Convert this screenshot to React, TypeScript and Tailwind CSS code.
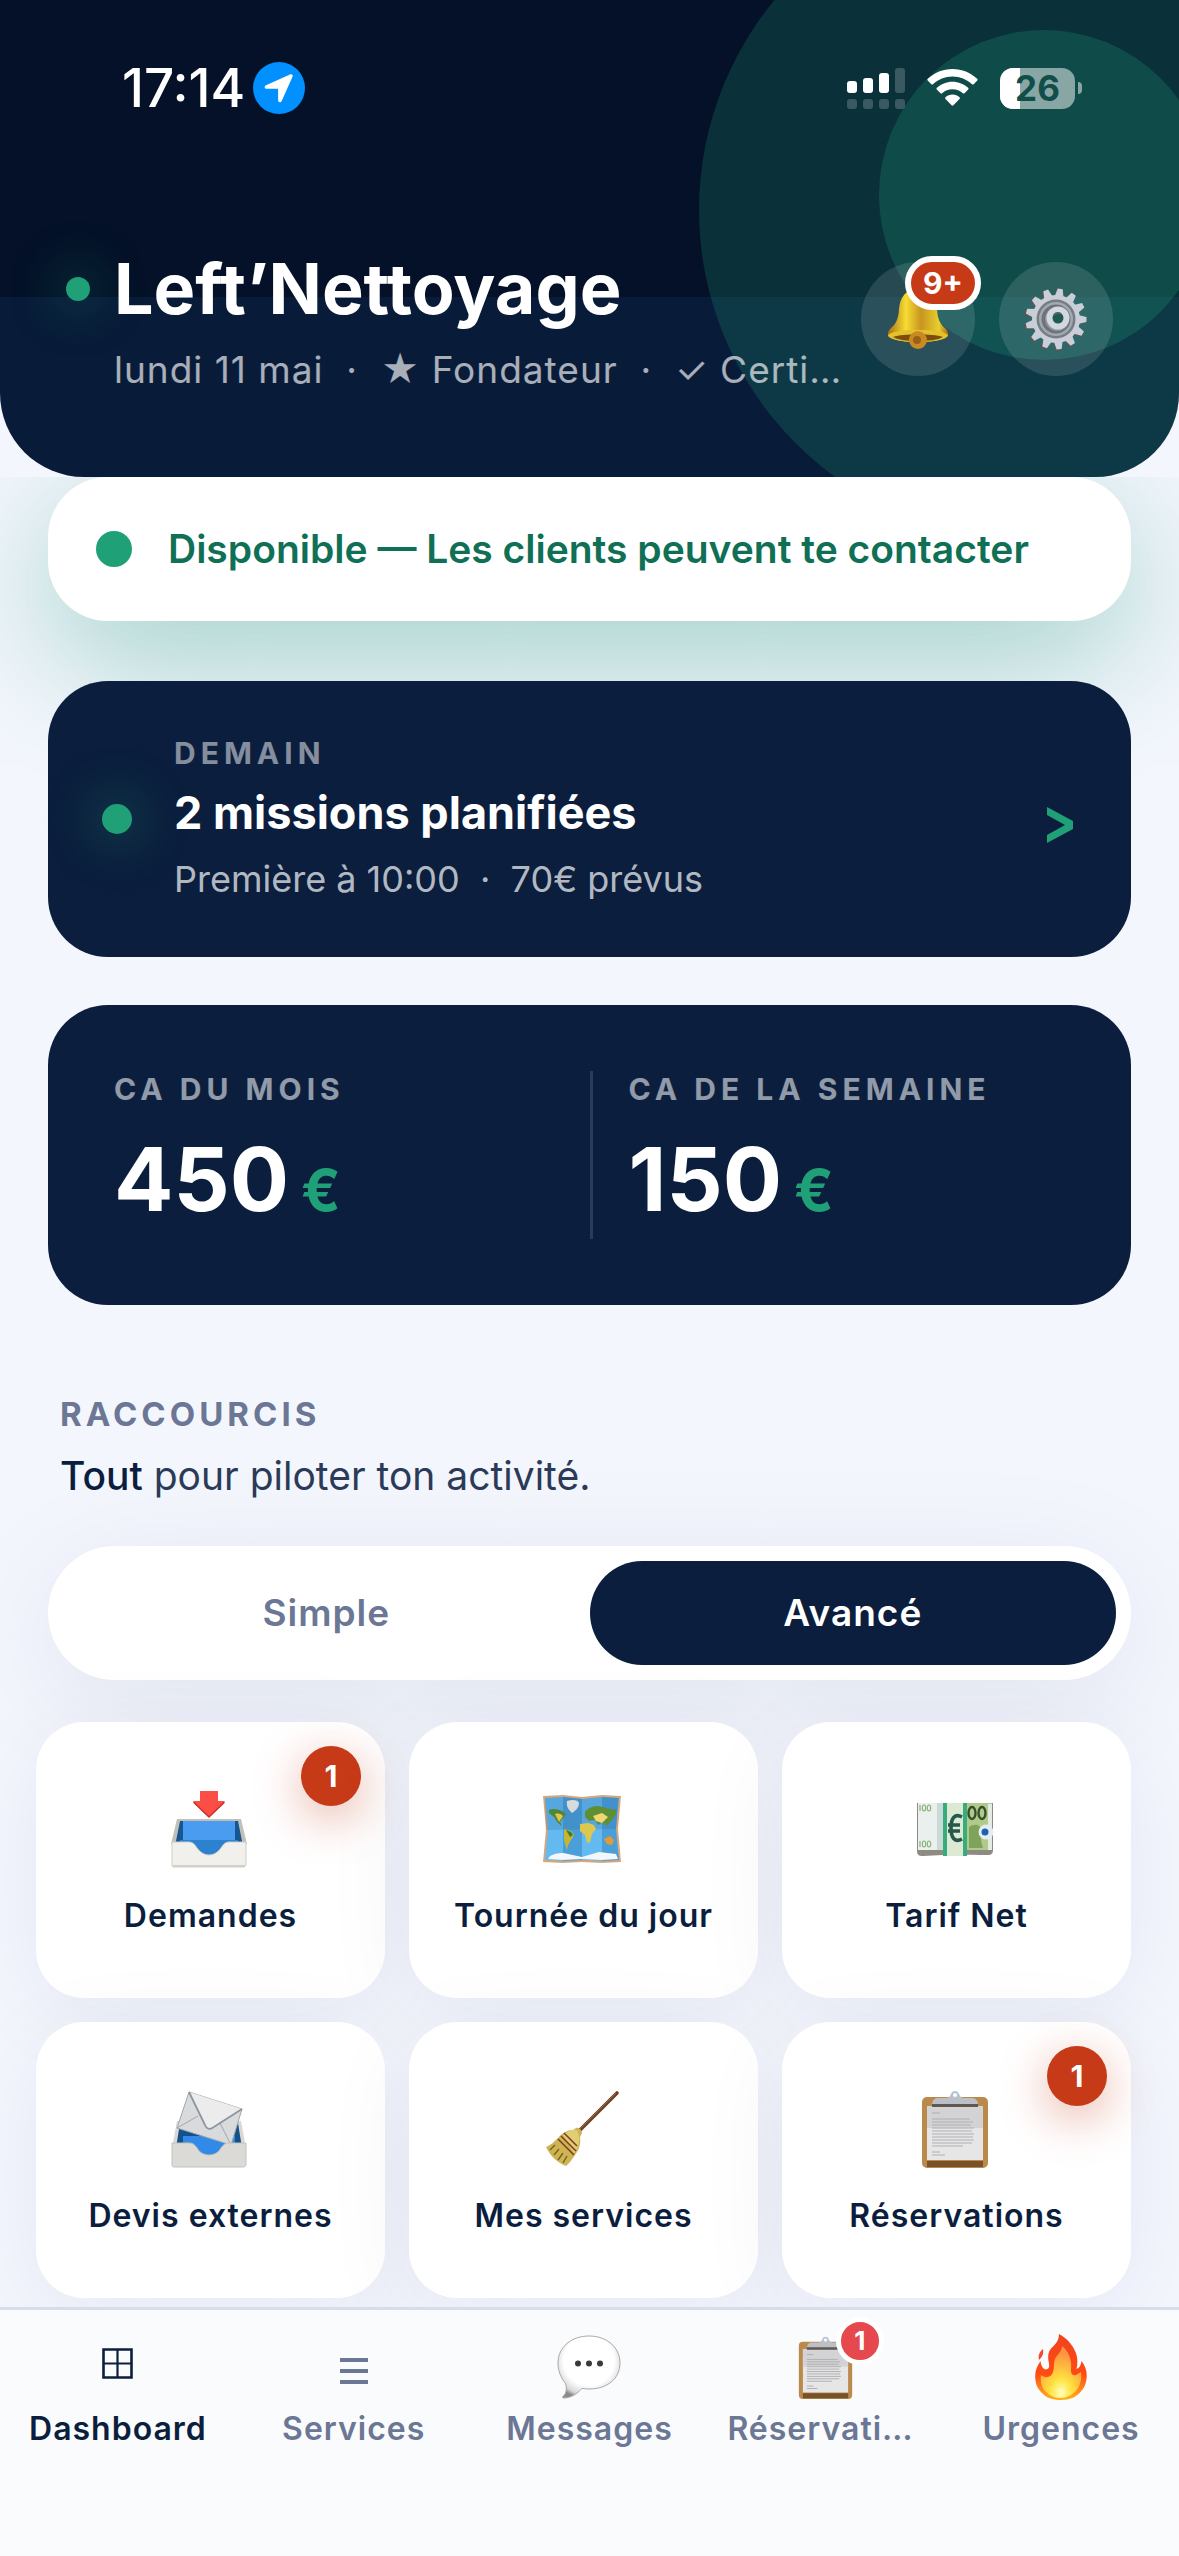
import type { ReactNode } from "react";

/* ---------- Status bar ---------- */

function SignalIcon() {
  const bars = [
    { x: 0, y: 13, h: 12, o: 1 },
    { x: 16, y: 10, h: 15, o: 1 },
    { x: 32, y: 5, h: 20, o: 1 },
    { x: 48, y: 0, h: 25, o: 0.2 },
  ];
  return (
    <svg width="58" height="41" viewBox="0 0 58 41" fill="#fff" aria-hidden="true">
      {bars.map((b) => (
        <g key={b.x}>
          <rect x={b.x} y={b.y} width="10" height={b.h} rx="3" opacity={b.o} />
          <rect x={b.x} y="31" width="10" height="10" rx="3" opacity="0.2" />
        </g>
      ))}
    </svg>
  );
}

function WifiIcon() {
  return (
    <svg width="51" height="38" viewBox="0 0 51 38" fill="#fff" aria-hidden="true">
      <path d="M25.500 0C35 0 43.700 3.700 50.200 9.800c.6.6.6 1.200.1 1.800l-3.600 3.600c-.5.5-1.200.5-1.700 0C39.800 10.400 33 7.500 25.500 7.500S11.200 10.400 6 15.200c-.5.5-1.200.5-1.700 0L.7 11.600c-.5-.6-.5-1.200.1-1.800C7.300 3.700 16 0 25.500 0z" />
      <path d="M25.500 12.700c6 0 11.500 2.300 15.600 6.100.6.6.6 1.200.1 1.800l-3.700 3.600c-.5.5-1.100.5-1.700.1-2.700-2.500-6.300-4-10.300-4s-7.600 1.500-10.300 4c-.6.4-1.200.4-1.700-.1l-3.700-3.600c-.5-.6-.5-1.200.1-1.800 4.100-3.800 9.600-6.100 15.600-6.100z" />
      <path d="M25.500 25.500c2.700 0 5.100 1 7 2.700.6.5.6 1.200 0 1.700l-6.100 6.400c-.5.6-1.300.6-1.800 0l-6.100-6.400c-.6-.5-.6-1.200 0-1.700 1.900-1.700 4.300-2.700 7-2.700z" />
    </svg>
  );
}

function StatusBar() {
  return (
    <div className="flex items-center justify-between pr-[97px] pl-[122px] text-white">
      <div className="flex items-center gap-2">
        <span className="text-[53px] leading-[52px] font-medium">17:14</span>
        <span className="flex size-[52px] items-center justify-center rounded-full bg-[#0090ff]">
          <svg width="30" height="30" viewBox="0 0 30 30" fill="#fff" aria-hidden="true">
            <path d="M26.500 1.300 2 12.200c-2 .9-1.500 3.600.7 3.600h10.800c.3 0 .6.300.6.600v10.800c0 2.200 2.700 2.700 3.600.7L28.600 3.400c.6-1.400-.7-2.700-2.100-2.100z" />
          </svg>
        </span>
      </div>
      <div className="flex items-center gap-[22px]">
        <SignalIcon />
        <WifiIcon />
        <span className="flex items-center gap-[3px]">
          <span className="relative flex h-[41px] w-[75px] items-center justify-center overflow-hidden rounded-[13px] bg-white/50">
            <span className="absolute inset-y-0 left-0 w-5 bg-white" />
            <span className="relative text-[35px] leading-none font-bold text-[#0f4e49]">26</span>
          </span>
          <span className="h-3 w-1 rounded-r-full bg-white/50" />
        </span>
      </div>
    </div>
  );
}

/* ---------- Pictograms ---------- */

function BellIcon() {
  return (
    <svg width="62" height="64" viewBox="0 0 62 64" aria-hidden="true">
      <defs>
        <linearGradient id="bell" x1="0" x2="1">
          <stop offset="0" stopColor="#a8700f" />
          <stop offset=".3" stopColor="#f7dc35" />
          <stop offset=".55" stopColor="#c89420" />
          <stop offset=".85" stopColor="#e9cf2e" />
          <stop offset="1" stopColor="#a66c10" />
        </linearGradient>
      </defs>
      <path d="M31 2c12 0 18 8 19 20 .6 10 3 15 8 19 2 2 3.500 4 3 7-.3 4-13 7-30 7S1.300 52 1 48c-.5-3 1-5 3-7 5-4 7.400-9 8-19C13 10 19 2 31 2z" fill="url(#bell)" />
      <path d="M1 48c3-3 12-5 30-5s27 2 30 5c-.3 4-13 7-30 7S1.300 52 1 48z" fill="#e3c22c" />
      <path d="M6 50c6-2 14-2.500 25-2.500S50 48 56 50c-5 3-14 4-25 4S11 53 6 50z" fill="#7d4c0c" />
      <circle cx="31" cy="53" r="9" fill="#c98a22" />
      <circle cx="30" cy="53" r="4" fill="#7a450f" opacity=".6" />
    </svg>
  );
}

function GearIcon() {
  const teeth = Array.from({ length: 13 }, (_, i) => (i * 360) / 13 + 8);
  return (
    <svg width="64" height="64" viewBox="0 0 64 64" aria-hidden="true">
      <g fill="#5f5550" transform="translate(-1 1)">
        {teeth.map((a) => (
          <path key={a} d="M28 9 29.500 1h5L36 9z" transform={`rotate(${a} 32 32)`} />
        ))}
      </g>
      <g fill="#c9ced8">
        {teeth.map((a) => (
          <path key={a} d="M27.500 10 29.500 1.500h5L36.500 10z" transform={`rotate(${a} 32 32)`} />
        ))}
        <circle cx="32" cy="32" r="24" />
      </g>
      <circle cx="32" cy="32" r="19.500" fill="#767d85" />
      <circle cx="32" cy="32" r="17" fill="#a3a9b0" />
      <circle cx="32" cy="32" r="14.500" fill="#6c737b" />
      <circle cx="33" cy="32" r="12" fill="#8d949c" />
      <circle cx="34" cy="31" r="8.500" fill="#1f5a55" stroke="#d3d7e0" strokeWidth="6" />
      <path d="M30 28a5 5 0 0 1 7-1" stroke="#59636b" strokeWidth="2" fill="none" />
    </svg>
  );
}

function InboxIcon() {
  return (
    <svg width="78" height="78" viewBox="0 0 76 78" aria-hidden="true">
      <path d="M6 29h64l6 25H0z" fill="#c3c0b9" />
      <path d="M9 31h58l5 25H4z" fill="#17568f" />
      <path d="M12 31h52v19H12z" fill="#4a9cf0" />
      <path d="M9 50h58v18H9z" fill="#2c82cf" />
      <path d="M1 52h17c4 0 6 3 8 6 3 4 7 7 12 7s9-3 12-7c2-3 4-6 8-6h17v22c0 2-1 3-3 3H3c-2 0-2-1-2-3z" fill="#f1f0ed" stroke="#cfcdc7" />
      <path d="M2 76h72" stroke="#d2d0ca" strokeWidth="2" />
      <path d="M29 1h18v10h6c1 0 1 1 .5 2L39 26.500c-.7.700-1.300.700-2 0L22.500 13c-.5-1-.5-2 .5-2h6z" fill="#fb4f45" />
      <path d="M23 12.500 38 27l15-14.500" stroke="#d02f2b" strokeWidth="1.500" fill="none" />
    </svg>
  );
}

function OutboxIcon() {
  return (
    <svg width="78" height="78" viewBox="0 0 76 78" aria-hidden="true">
      <path d="M6 31h64l5 27H1z" fill="#d9d8d4" />
      <path d="M9 33h58l4 25H5z" fill="#14508a" />
      <path d="M12 46h52v24H12z" fill="#318be6" />
      <g stroke="#a2a7ae" strokeLinejoin="round">
        <path d="M18 2 71 19 60 55 6 38z" fill="#d9dadb" />
        <path d="m6 38 21-12M60 55 49 33" fill="none" />
        <path d="m18 2 16 33c1.500 4 4.500 5 8 2.500L71 19" fill="#ececed" strokeWidth="1.800" stroke="#8e96a3" />
      </g>
      <path d="M1 53h17c4 0 6 2 8 5 3 5 7 7 12 7s9-2 12-7c2-3 4-5 8-5h17v21c0 2-1 3-3 3H3c-2 0-2-1-2-3z" fill="#dbdad6" stroke="#c4c3be" />
    </svg>
  );
}

function MapIcon() {
  return (
    <svg width="78" height="78" viewBox="0 0 78 78" aria-hidden="true">
      <path d="m0 6 20-1 19 2 20-2 19 1-3 33 3 33-19 1-20-1-19 1-20-1 3-33z" fill="#d9a67c" />
      <path d="m2 8 18-1 19 2 20-2 17 1-3 31 3 31-17 1-20-1-19 1-18-1 3-31z" fill="#63baf0" />
      <path d="m20 7 19 2v61l-19 1zM59 7l17 1-3 31 3 31-17 1z" fill="#2878b3" opacity=".4" />
      <path d="m3 40 70-1 2-31-16-1-20 2-19-2-18 1z" fill="#174f82" opacity=".17" />
      <path d="M24 11c6-2 11-1 12 2 0 5-4 8-7 10-3-3-6-6-5-12z" fill="#d9dadb" />
      <path d="M6 20c3-2 9-1 13 1l4 3-3 4-3 4 2 4-4-3-4-6-5-4z" fill="#4f8737" />
      <path d="M12 24c4-1 6 0 8 2l-4 6z" fill="#e8c445" />
      <path d="m21 39 7 2 3 4-3 5-3 5-1 5-3-10z" fill="#c6b52f" />
      <path d="m23 40 5 2 2 3-3 2z" fill="#3e7d31" />
      <path d="M42 22c3-4 8-6 13-6l12 3 7 1-2 6-5 6-3 4-4-4-5 3-3-5-6 1-4-4z" fill="#5f8e33" />
      <path d="m37 34 8-1 6 2 2 4-4 5-2 8-3 1-2-8-5-4z" fill="#ddc74c" />
      <path d="m50 26 9-3 6 4-6 6-6-2z" fill="#efd873" />
      <path d="m61 49 6-3 4 4-2 5-5-1z" fill="#e69a35" />
      <path d="M7 66c6-3 12-4 18-2l14 3 17-5 17 2 2 5-16 1-20-1-19 1-15-1z" fill="#f4f6f9" />
    </svg>
  );
}

function MoneyIcon() {
  return (
    <svg width="78" height="78" viewBox="0 0 78 78" aria-hidden="true">
      <path d="M1 13h76v47c0 4-2 5-5 5-10 0-20-1-33 1-13-2-22 0-32 0-4 0-6-1-6-5z" fill="#8f8b82" />
      <path d="M2 13h37v47H2z" fill="#e9f0ee" />
      <path d="M21 13h8v47h-8z" fill="#cbdad7" />
      <path d="M50 13h26v47H50z" fill="#b2c98c" />
      <path d="M53 37c6-4 12-2 12 3s-1 9 2 18H53z" fill="#7fa35a" />
      <path d="M72 14h4v46h-4z" fill="#e3ece2" />
      <circle cx="70" cy="42" r="7.500" fill="#e3edf3" />
      <circle cx="69" cy="42" r="3.500" fill="#1f62ad" />
      <g fill="none" stroke="#33502c" strokeWidth="2.400">
        <ellipse cx="56" cy="23" rx="3.500" ry="6" />
        <ellipse cx="66" cy="23" rx="3.500" ry="6" />
      </g>
      <g fill="none" stroke="#8fb37c" strokeWidth="1.200">
        <path d="M4 15v6M4 51v6" />
        <ellipse cx="8" cy="18" rx="1.700" ry="3" />
        <ellipse cx="13" cy="18" rx="1.700" ry="3" />
        <ellipse cx="8" cy="54" rx="1.700" ry="3" />
        <ellipse cx="13" cy="54" rx="1.700" ry="3" />
      </g>
      <path d="M27 13h24v53H27z" fill="#36ad7c" />
      <path d="M31 13h16v53H31z" fill="#dcead4" />
      <path d="M46 27c-7-4-11 1-11 11s4 15 11 11M32 35h12M32 41h12" fill="none" stroke="#27584c" strokeWidth="3.600" />
    </svg>
  );
}

function BroomIcon() {
  return (
    <svg width="78" height="78" viewBox="0 0 78 78" aria-hidden="true">
      <path d="M74 3 37 40" stroke="#6f3f26" strokeWidth="3.600" strokeLinecap="round" />
      <path d="m73 3-36 36" stroke="#9a6846" strokeWidth="1" />
      <path d="M33 38c2-1 6 2 6 5l-2 4c1 7-1 13-5 18-3 4-5 8-9 11-8-3-16-10-20-19 5-2 8-5 12-9 4-5 9-8 15-8z" fill="#ceb553" />
      <path d="M20 45c5-5 10-6 14-5l2 6c1 6-1 12-5 17z" fill="#e0cd74" />
      <path d="m15 49 16 16M18 46l15 15M21 43l13 13" stroke="#7f3f25" strokeWidth="1.600" />
      <path d="m12 55-5 5m9-1-5 6m9-2-5 7m9-4-4 7" stroke="#7d641f" strokeWidth="1.500" />
    </svg>
  );
}

function ClipboardIcon({ size = 78 }: { size?: number }) {
  return (
    <svg width={size} height={size} viewBox="0 0 78 78" aria-hidden="true">
      <rect x="6" y="7" width="66" height="71" rx="5" fill="#b98a4c" />
      <path d="M11 71h56v6H11z" fill="#77522a" />
      <path d="M11 16h56v54H11z" fill="#e6e6e7" />
      <path d="M11 16h56v22H11z" fill="#d3d3d5" />
      <path d="M30 8c3 0 4-2 5-4 1-4 7-4 8 0 1 2 2 4 5 4h8c4 0 6 3 6 7H16c0-4 2-7 6-7z" fill="#bcc0c6" />
      <path d="M16 14h46v3H16z" fill="#5f5750" />
      <circle cx="39" cy="5" r="2.500" fill="#fff" stroke="#a9c2e4" />
      <path
        d="M16 23h8M16 29h38M16 32h41M16 35h39M16 38h42M16 41h40M16 44h42M16 47h41M16 50h42M16 53h40M16 56h31M16 62h8M16 65h13"
        stroke="#b0b0b3"
        strokeWidth="1.200"
      />
    </svg>
  );
}

function GridIcon() {
  return (
    <svg width="31" height="31" viewBox="0 0 31 31" fill="none" stroke="currentColor" className="mb-2" aria-hidden="true">
      <path d="M1.500 1.500h28v28h-28z" strokeWidth="2.600" />
      <path d="M15.500 1v29M1 15.500h29" strokeWidth="2.200" />
    </svg>
  );
}

function MenuIcon() {
  return (
    <svg width="28" height="26" viewBox="0 0 28 26" fill="currentColor" className="mt-2" aria-hidden="true">
      <path d="M0 0h28v4H0zM0 11h28v4H0zM0 22h28v4H0z" />
    </svg>
  );
}

function BubbleIcon() {
  return (
    <svg width="64" height="64" viewBox="0 0 64 64" aria-hidden="true">
      <defs>
        <radialGradient id="bubble" cx=".5" cy=".4" r=".62">
          <stop offset=".65" stopColor="#fff" />
          <stop offset=".9" stopColor="#d8d8d9" />
          <stop offset="1" stopColor="#8b8b8c" />
        </radialGradient>
      </defs>
      <path
        d="M32 1c17.500 0 31 11 31 27S50 54 32 54c-2.500 0-5-.2-7-.700C20 59 14 63 6.500 63c-1 0-1.300-1-.5-1.600 3.500-3 4-8 2.500-13C4 43 1 36 1 28 1 12 14.500 1 32 1z"
        fill="url(#bubble)"
        stroke="#a9a9aa"
      />
      <g fill="#3a3a3c">
        <circle cx="21" cy="28.500" r="3" />
        <circle cx="32" cy="28.500" r="3" />
        <circle cx="43" cy="28.500" r="3" />
      </g>
    </svg>
  );
}

function FireIcon() {
  return (
    <svg width="52" height="66" viewBox="0 0 52 66" aria-hidden="true">
      <defs>
        <linearGradient id="fire" x1="0" x2="0" y1="0" y2="1">
          <stop offset="0" stopColor="#f0431f" />
          <stop offset=".6" stopColor="#ff4a12" />
          <stop offset="1" stopColor="#ffb21c" />
        </linearGradient>
        <radialGradient id="flame" cx=".5" cy=".9" r=".75">
          <stop offset="0" stopColor="#ffffc0" />
          <stop offset=".35" stopColor="#ffe340" />
          <stop offset="1" stopColor="#ff9440" />
        </radialGradient>
      </defs>
      <path d="M24 0c9 5 16 13 18 23 .6 4 .5 8-.5 12 3-1 4.500-4 5-8 4 5 6 11 5 18-.8 6-3 10-6 13-4 5-11 8-19.500 8S11 64 6 58C3 55 .8 51 .3 45-.5 38 2 32 5.500 27c.5 4 2 8 5.500 8.500C15 35.500 14.500 31 13.500 27c-1-6 0-11 5-15C22 9 24 5 24 0z" fill="url(#fire)" />
      <path d="M27 12c7 6 10 14 9 23-.3 4 1 7 5 6l5-3c1 8-1 14-5 19-4 4-9 7-15 7S15 62 11 58c-4-4-6-9-5-17 3 3 9 3 11-1 3-5 1-10 3-15 2-5 7-7 7-13z" fill="url(#flame)" />
      <path d="M8 15c1 5-1 8-4 11-1-4 0-8 4-11z" fill="#f04a30" />
    </svg>
  );
}

/* ---------- Header ---------- */

function Header() {
  return (
    <header className="relative overflow-hidden rounded-b-[84px] bg-[#081b38] pt-[62px] pb-[83px]">
      <div className="absolute inset-x-0 top-0 h-[297px] bg-[#041128]" />
      <div className="absolute -top-[120px] -right-[180px] size-[660px] rounded-full bg-[#1fa077]/22" />
      <div className="absolute top-[30px] -right-[30px] size-[330px] rounded-full bg-[#1fa077]/26" />

      <div className="relative">
        <StatusBar />
        <div className="mt-[130px] flex items-center gap-3 px-[66px]">
          <div className="min-w-0 flex-1">
            <div className="flex items-center gap-6">
              <span className="size-6 shrink-0 rounded-full bg-[#1fa077] shadow-[0_0_48px_12px_rgba(31,160,119,0.25)]" />
              <h1 className="text-[70px] leading-[90px] font-bold whitespace-nowrap text-white">Left’Nettoyage</h1>
            </div>
            <p className="mt-3 ml-12 truncate text-[37px] leading-12 tracking-[1px] whitespace-pre text-white/65">
              {"lundi 11 mai  ·  ★ Fondateur  ·  ✓ Certifié"}
            </p>
          </div>
          <div className="flex gap-6">
            <button type="button" aria-label="Notifications" className="relative flex size-[114px] items-center justify-center rounded-full bg-white/12">
              <BellIcon />
              <span className="absolute -top-1.5 left-11 flex h-[54px] items-center rounded-full border-[6px] border-white bg-[#c63a17] px-3 text-[30px] leading-none font-bold text-white">
                9+
              </span>
            </button>
            <button type="button" aria-label="Réglages" className="flex size-[114px] items-center justify-center rounded-full bg-white/12">
              <GearIcon />
            </button>
          </div>
        </div>
      </div>
    </header>
  );
}

/* ---------- Cards ---------- */

function AvailabilityCard() {
  return (
    <button
      type="button"
      className="flex h-36 w-full items-center gap-9 rounded-[60px] bg-white px-12 text-left text-[39px] leading-12 font-semibold text-[#0f7056] shadow-[0_36px_132px_rgba(31,150,115,0.4)]"
    >
      <span className="size-9 rounded-full bg-[#1fa077]" />
      Disponible — Les clients peuvent te contacter
    </button>
  );
}

function TomorrowCard() {
  return (
    <a href="#planning" className="mt-[60px] flex items-center rounded-[60px] bg-[#0b1e3d] p-[54px] text-white">
      <span className="size-[30px] rounded-full bg-[#1fa077] shadow-[0_0_48px_12px_rgba(31,160,119,0.25)]" />
      <span className="ml-[42px] flex flex-1 flex-col gap-3">
        <span className="text-[30px] leading-9 font-bold tracking-[5px] text-white/50">DEMAIN</span>
        <span className="text-[45px] leading-[60px] font-bold">2 missions planifiées</span>
        <span className="text-[36px] leading-12 whitespace-pre text-white/70">{"Première à 10:00  ·  70€ prévus"}</span>
      </span>
      <svg width="26" height="36" viewBox="0 0 26 36" className="mt-3 mr-1" fill="#1fa077" aria-hidden="true">
        <path d="M0 0 26 14v8L0 36v-8l18-10L0 8z" />
      </svg>
    </a>
  );
}

function Stat({ label, value, className = "" }: { label: string; value: string; className?: string }) {
  return (
    <div className={`flex flex-col gap-3 ${className}`}>
      <span className="text-[30px] leading-9 font-bold tracking-[5px] text-white/55">{label}</span>
      <span className="flex items-baseline gap-3 font-bold">
        <span className="text-[88px] leading-[120px] text-white">{value}</span>
        <span className="text-[58px] leading-none text-[#1fa077]">€</span>
      </span>
    </div>
  );
}

function RevenueCard() {
  return (
    <section className="mt-12 grid grid-cols-2 rounded-[60px] bg-[#0b1e3d] p-[66px]">
      <Stat label="CA DU MOIS" value="450" />
      <Stat label="CA DE LA SEMAINE" value="150" className="border-l-[3px] border-[#2b3b59] pl-9" />
    </section>
  );
}

function ModeSwitch() {
  return (
    <div className="mt-10 flex rounded-full bg-white p-[15px] text-[37px] leading-12 font-semibold tracking-[1px] shadow-[0_24px_120px_rgba(11,30,61,0.08)]">
      <button type="button" aria-pressed="false" className="h-[104px] flex-1 rounded-full text-[#6b7794]">
        Simple
      </button>
      <button type="button" aria-pressed="true" className="h-[104px] flex-1 rounded-full bg-[#0b1e3d] text-white">
        Avancé
      </button>
    </div>
  );
}

type Shortcut = { label: string; icon: ReactNode; badge?: number };

const shortcuts: Shortcut[] = [
  { label: "Demandes", icon: <InboxIcon />, badge: 1 },
  { label: "Tournée du jour", icon: <MapIcon /> },
  { label: "Tarif Net", icon: <MoneyIcon /> },
  { label: "Devis externes", icon: <OutboxIcon /> },
  { label: "Mes services", icon: <BroomIcon /> },
  { label: "Réservations", icon: <ClipboardIcon />, badge: 1 },
];

function ShortcutTile({ label, icon, badge }: Shortcut) {
  return (
    <button
      type="button"
      className="relative flex flex-col items-center gap-6 rounded-[48px] bg-white pt-[68px] pb-[58px] text-[32px] leading-12 font-semibold tracking-[1px] whitespace-nowrap text-[#0b1e3d] shadow-[0_18px_96px_rgba(11,30,61,0.06)]"
    >
      <span className="pr-1">{icon}</span>
      {label}
      {badge && (
        <span className="absolute top-6 right-6 flex size-[60px] items-center justify-center rounded-full bg-[#c63a17] text-[30px] leading-none font-bold tracking-normal text-white shadow-[0_12px_48px_rgba(198,58,23,0.4)]">
          {badge}
        </span>
      )}
    </button>
  );
}

/* ---------- Bottom tabs ---------- */

type Tab = { label: string; icon: ReactNode; active?: boolean; badge?: number };

const tabs: Tab[] = [
  { label: "Dashboard", icon: <GridIcon />, active: true },
  { label: "Services", icon: <MenuIcon /> },
  { label: "Messages", icon: <BubbleIcon /> },
  { label: "Réservations", icon: <ClipboardIcon size={63} />, badge: 1 },
  { label: "Urgences", icon: <FireIcon /> },
];

function TabBar() {
  return (
    <nav className="relative grid grid-cols-5 border-t-[3px] border-[#d7deea] bg-[#fafbfd] pt-6 pb-[103px]">
      {tabs.map((tab) => (
        <a
          key={tab.label}
          href={`#${tab.label.toLowerCase()}`}
          aria-current={tab.active ? "page" : undefined}
          className={`flex min-w-0 flex-col items-center gap-[5px] px-5 text-[32px] leading-12 font-semibold tracking-[1px] ${
            tab.active ? "text-[#0b1e3d]" : "text-[#6b7794]"
          }`}
        >
          <span className="relative flex h-[66px] items-center">
            {tab.icon}
            {tab.badge && (
              <span className="absolute -top-[17px] -right-[27px] flex size-12 items-center justify-center rounded-full border-[5px] border-white bg-[#e5484d] text-[26px] leading-none font-bold tracking-normal text-white">
                {tab.badge}
              </span>
            )}
          </span>
          <span className="max-w-full truncate">{tab.label}</span>
        </a>
      ))}
    </nav>
  );
}

export default function App() {
  return (
    <div className="flex min-h-screen flex-col bg-[#f3f6fd] font-['Inter','Liberation_Sans',sans-serif]">
      <Header />
      <main className="flex-1 overflow-hidden pb-[9px]">
        <div className="px-12">
          <AvailabilityCard />
          <TomorrowCard />
          <RevenueCard />
          <div className="mt-[85px] pl-3">
            <h2 className="text-[33px] leading-12 font-bold tracking-[4px] text-[#6b7794]">RACCOURCIS</h2>
            <p className="mt-2 text-[39px] leading-[60px] text-[#2b3a57]">
              <span className="font-medium text-[#0b1e3d]">Tout</span> pour piloter ton activité.
            </p>
          </div>
          <ModeSwitch />
        </div>
        <div className="mt-[42px] grid grid-cols-3 gap-6 pr-12 pl-9">
          {shortcuts.map((s) => (
            <ShortcutTile key={s.label} {...s} />
          ))}
        </div>
      </main>
      <TabBar />
    </div>
  );
}
